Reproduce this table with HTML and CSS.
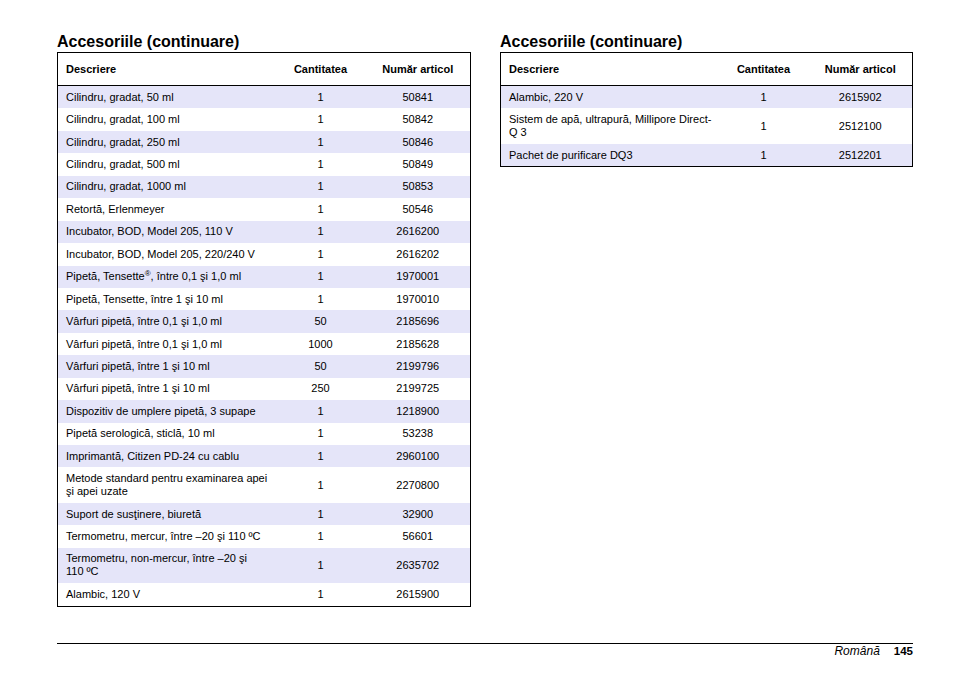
FILE: index.html
```html
<!DOCTYPE html>
<html lang="ro">
<head>
<meta charset="utf-8">
<title>Accesoriile (continuare)</title>
<link rel="stylesheet" href="styles.css">
</head>
<body>
<div class="page">
  <div class="columns">
    <section class="col">
      <h2 class="title">Accesoriile (continuare)</h2>
      <table class="acc">
        <colgroup><col class="c1"><col class="c2"><col class="c3"></colgroup>
        <thead>
          <tr><th class="desc">Descriere</th><th>Cantitatea</th><th>Număr articol</th></tr>
        </thead>
        <tbody>
          <tr><td class="desc">Cilindru, gradat, 50 ml</td><td>1</td><td>50841</td></tr>
          <tr><td class="desc">Cilindru, gradat, 100 ml</td><td>1</td><td>50842</td></tr>
          <tr><td class="desc">Cilindru, gradat, 250 ml</td><td>1</td><td>50846</td></tr>
          <tr><td class="desc">Cilindru, gradat, 500 ml</td><td>1</td><td>50849</td></tr>
          <tr><td class="desc">Cilindru, gradat, 1000 ml</td><td>1</td><td>50853</td></tr>
          <tr><td class="desc">Retortă, Erlenmeyer</td><td>1</td><td>50546</td></tr>
          <tr><td class="desc">Incubator, BOD, Model 205, 110 V</td><td>1</td><td>2616200</td></tr>
          <tr><td class="desc">Incubator, BOD, Model 205, 220/240 V</td><td>1</td><td>2616202</td></tr>
          <tr><td class="desc">Pipetă, Tensette<sup>®</sup>, între 0,1 şi 1,0 ml</td><td>1</td><td>1970001</td></tr>
          <tr><td class="desc">Pipetă, Tensette, între 1 şi 10 ml</td><td>1</td><td>1970010</td></tr>
          <tr><td class="desc">Vârfuri pipetă, între 0,1 şi 1,0 ml</td><td>50</td><td>2185696</td></tr>
          <tr><td class="desc">Vârfuri pipetă, între 0,1 şi 1,0 ml</td><td>1000</td><td>2185628</td></tr>
          <tr><td class="desc">Vârfuri pipetă, între 1 şi 10 ml</td><td>50</td><td>2199796</td></tr>
          <tr><td class="desc">Vârfuri pipetă, între 1 şi 10 ml</td><td>250</td><td>2199725</td></tr>
          <tr><td class="desc">Dispozitiv de umplere pipetă, 3 supape</td><td>1</td><td>1218900</td></tr>
          <tr><td class="desc">Pipetă serologică, sticlă, 10 ml</td><td>1</td><td>53238</td></tr>
          <tr><td class="desc">Imprimantă, Citizen PD-24 cu cablu</td><td>1</td><td>2960100</td></tr>
          <tr><td class="desc">Metode standard pentru examinarea apei şi apei uzate</td><td>1</td><td>2270800</td></tr>
          <tr><td class="desc">Suport de susţinere, biuretă</td><td>1</td><td>32900</td></tr>
          <tr><td class="desc">Termometru, mercur, între –20 şi 110&nbsp;ºC</td><td>1</td><td>56601</td></tr>
          <tr><td class="desc">Termometru, non-mercur, între –20 şi 110&nbsp;ºC</td><td>1</td><td>2635702</td></tr>
          <tr><td class="desc">Alambic, 120 V</td><td>1</td><td>2615900</td></tr>
        </tbody>
      </table>
    </section>
    <section class="col">
      <h2 class="title">Accesoriile (continuare)</h2>
      <table class="acc">
        <colgroup><col class="c1"><col class="c2"><col class="c3"></colgroup>
        <thead>
          <tr><th class="desc">Descriere</th><th>Cantitatea</th><th>Număr articol</th></tr>
        </thead>
        <tbody>
          <tr><td class="desc">Alambic, 220 V</td><td>1</td><td>2615902</td></tr>
          <tr><td class="desc">Sistem de apă, ultrapură, Millipore Direct-Q 3</td><td>1</td><td>2512100</td></tr>
          <tr><td class="desc">Pachet de purificare DQ3</td><td>1</td><td>2512201</td></tr>
        </tbody>
      </table>
    </section>
  </div>
  <footer class="footer">
    <span class="lang">Română</span><span class="num">145</span>
  </footer>
</div>
</body>
</html>
```

FILE: styles.css
```css
html, body {
  margin: 0;
  padding: 0;
  background: #fff;
}
body {
  font-family: "Liberation Sans", Arial, sans-serif;
  color: #000;
  width: 954px;
  height: 673px;
}
.page {
  padding: 33px 41px 0 57px;
  height: 625px;
  display: flex;
  flex-direction: column;
}
.columns {
  display: flex;
  gap: 29px;
  flex: 1;
  align-items: flex-start;
}
.col {
  width: 414px;
}
.col + .col {
  width: 413px;
}
.title {
  font-size: 16px;
  font-weight: bold;
  margin: 0 0 1px 0;
  line-height: 18px;
}
.acc {
  width: 100%;
  border-collapse: collapse;
  border: 1px solid #000;
  table-layout: fixed;
  font-size: 11px;
}
.c1 { width: 218px; }
.c2 { width: 90px; }
.c3 { width: auto; }
.acc th {
  font-weight: bold;
  font-size: 11px;
  height: 32px;
  padding: 0 4px;
  text-align: center;
  border-bottom: 1px solid #000;
  vertical-align: middle;
}
.acc td {
  padding: 4.72px 4px;
  line-height: 13px;
  text-align: center;
  vertical-align: middle;
}
.acc .desc {
  text-align: left;
  padding-left: 8px;
}
.acc tbody tr:nth-child(odd) td {
  background: #e5e5f9;
}
sup {
  font-size: 8px;
  line-height: 0;
  vertical-align: 4px;
}
.footer {
  border-top: 1px solid #000;
  display: flex;
  justify-content: flex-end;
  align-items: baseline;
  gap: 14px;
  padding-top: 0;
  font-size: 11.5px;
  line-height: 14px;
}
.lang {
  font-style: italic;
  font-size: 12px;
}
.num {
  font-weight: bold;
}
```
